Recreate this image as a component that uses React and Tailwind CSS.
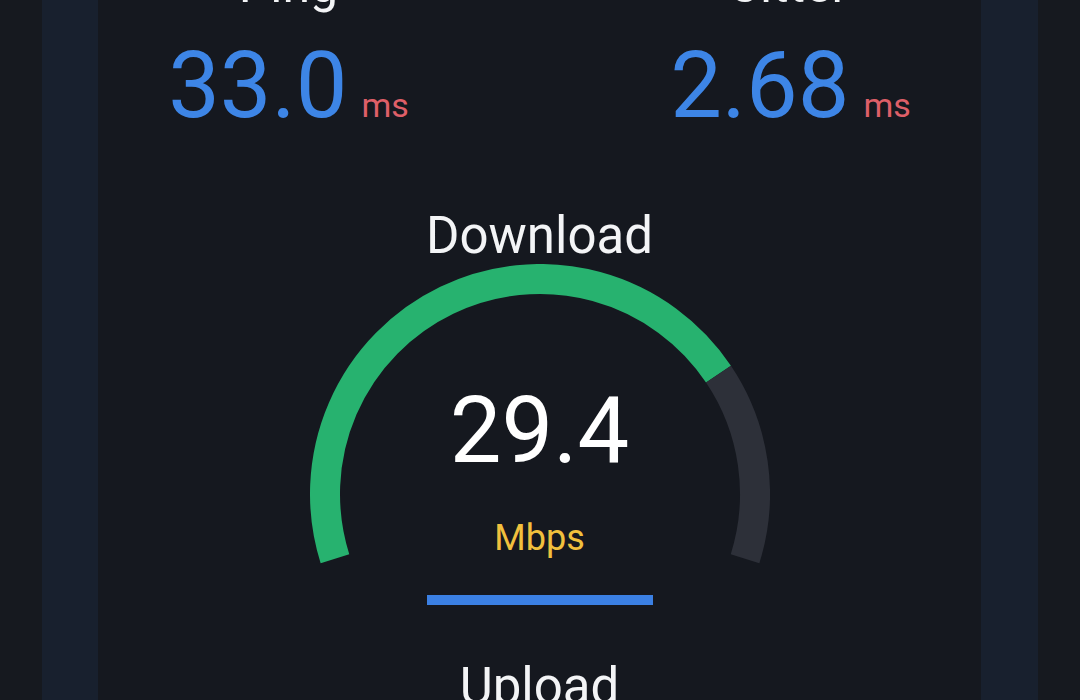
import React from "react";

const font = { fontFamily: "Roboto, 'Liberation Sans', sans-serif" };

// arc geometry: center (230,230), r 215, sweep from -107.5deg to +107.5deg (from top, clockwise)
const CX = 230;
const CY = 230;
const R = 215;

function pt(deg) {
  const a = (deg * Math.PI) / 180;
  return [CX + R * Math.sin(a), CY - R * Math.cos(a)];
}

function arc(from, to) {
  const [x1, y1] = pt(from);
  const [x2, y2] = pt(to);
  const large = to - from > 180 ? 1 : 0;
  return `M ${x1} ${y1} A ${R} ${R} 0 ${large} 1 ${x2} ${y2}`;
}

function Metric({ label, value, unit }) {
  return (
    <div className="w-[302px] flex flex-col items-center">
      <div className="text-[50px] leading-none text-[#f3f4f6] h-[50px] -mt-[40px]">
        {label}
      </div>
      <div className="flex items-baseline gap-[14px] mt-[30px]">
        <span className="text-[92px] leading-none text-[#3d85e6]">{value}</span>
        <span className="text-[34px] leading-none text-[#de5f68]">{unit}</span>
      </div>
    </div>
  );
}

function Gauge({ value, unit, percent }) {
  const start = -107.5;
  const end = 107.5;
  const split = start + (end - start) * percent;
  return (
    <div className="relative w-[460px] h-[300px]">
      <svg width="460" height="300" viewBox="0 0 460 300" fill="none">
        <path d={arc(start, split)} stroke="#27b26f" strokeWidth="30" />
        <path d={arc(split, end)} stroke="#2d3039" strokeWidth="30" />
      </svg>
      {/* value overlay */}
      <div className="absolute left-0 right-0 top-[121px] flex justify-center">
        <span className="text-[92px] leading-none text-white">{value}</span>
      </div>
      <div className="absolute left-0 right-0 top-[256px] flex justify-center">
        <span className="text-[36px] leading-none text-[#f1c03d]">{unit}</span>
      </div>
    </div>
  );
}

export default function App() {
  return (
    <div
      className="w-[1080px] h-[700px] overflow-hidden bg-[#16191f] flex"
      style={font}
    >
      <div className="w-[42px] shrink-0" />
      <div className="w-[56px] shrink-0 bg-[#18202e]" />

      {/* main panel */}
      <div className="flex-1 bg-[#15181f] flex flex-col items-center">
        <div className="flex justify-center gap-[200px] w-full shrink-0">
          <Metric label="Ping" value="33.0" unit="ms" />
          <Metric label="Jitter" value="2.68" unit="ms" />
        </div>

        <div className="text-[51px] leading-none text-[#f3f4f6] mt-[78px] shrink-0">
          Download
        </div>
        <div className="mt-[3px] shrink-0">
          <Gauge value="29.4" unit="Mbps" percent={0.761} />
        </div>
        <div className="w-[226px] h-[10px] bg-[#3b80e4] mt-[31px] shrink-0" />

        <div className="text-[51px] leading-none text-[#f3f4f6] mt-[56px] shrink-0">
          Upload
        </div>
      </div>

      <div className="w-[57px] shrink-0 bg-[#18202e]" />
      <div className="w-[42px] shrink-0" />
    </div>
  );
}
